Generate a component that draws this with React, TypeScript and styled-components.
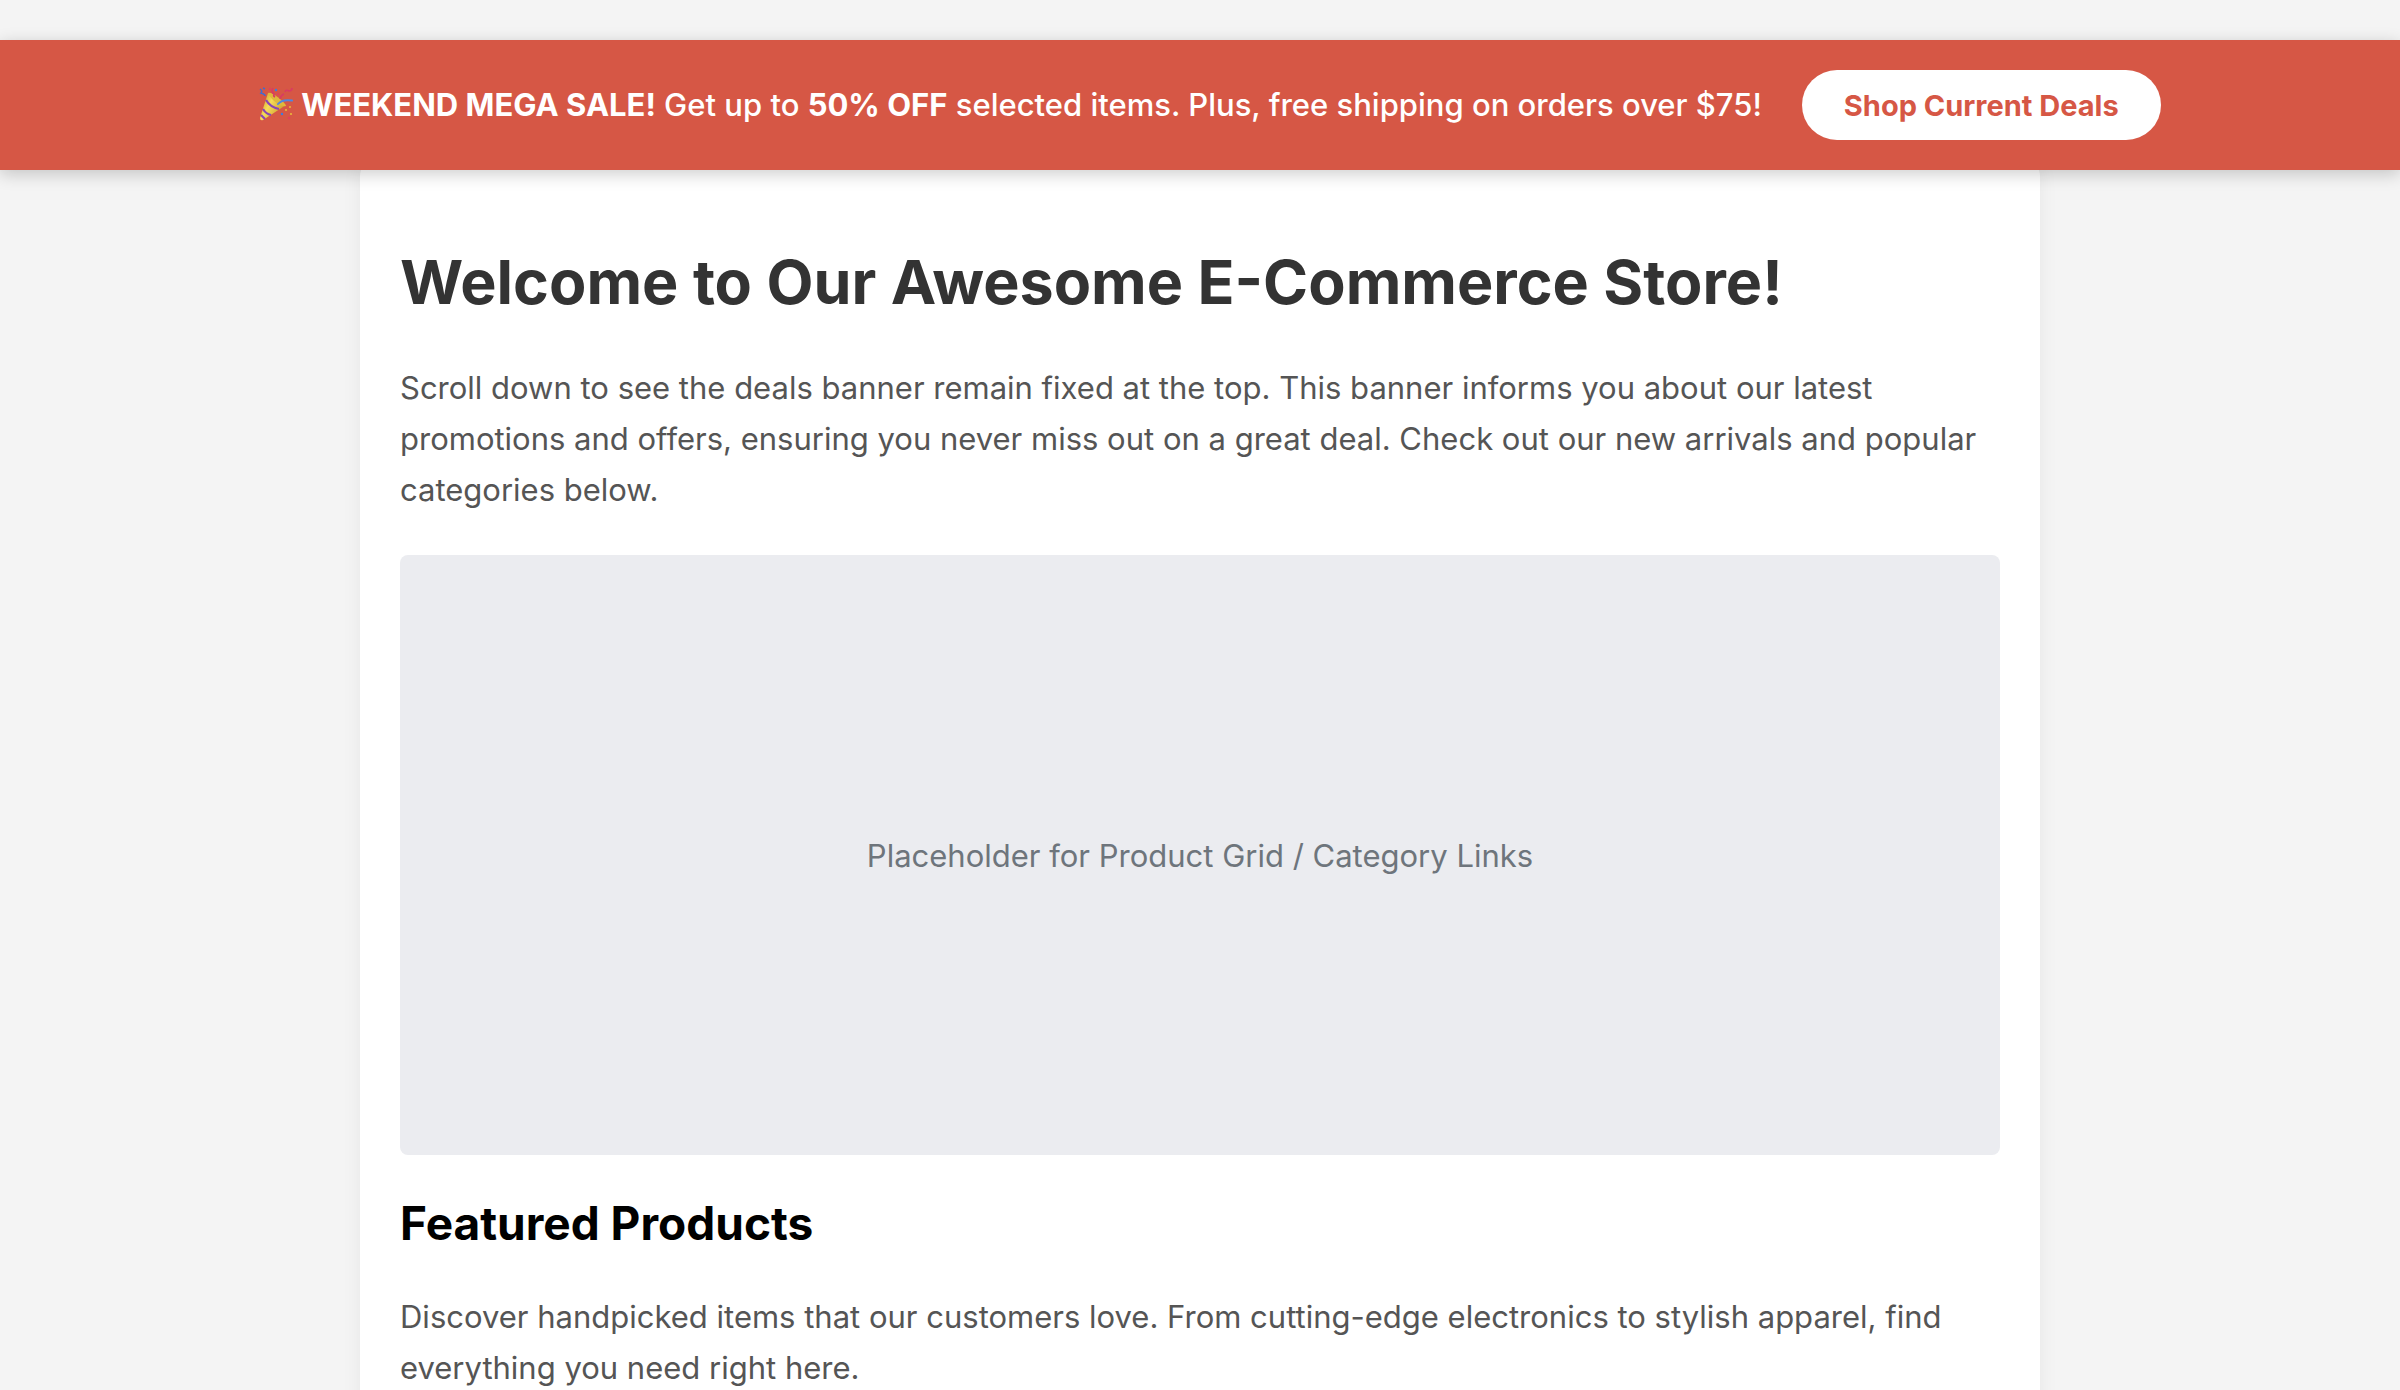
import React from "react";
import styled, { createGlobalStyle } from "styled-components";

const GlobalStyle = createGlobalStyle`
  *, *::before, *::after { box-sizing: border-box; }
  html { scrollbar-width: none; }
  body {
    margin: 0;
    background: #f4f4f4;
    color: #000;
    font-family: Inter, "Liberation Sans", sans-serif;
    font-size: 31px;
    line-height: 51px;
  }
`;

const Page = styled.div`
  padding-top: 40px;
`;

const Banner = styled.header`
  position: sticky;
  top: 0;
  z-index: 10;
  display: flex;
  align-items: center;
  justify-content: center;
  gap: 40px;
  padding: 30px 40px 30px 60px;
  background: #d65745;
  color: #fff;
  box-shadow: 0 4px 16px rgba(0, 0, 0, 0.2);
`;

const BannerText = styled.p`
  margin: 0;
  font-weight: 500;
  line-height: 50px;
`;

const Popper = styled.svg`
  width: 34px;
  height: 34px;
  margin-right: 8px;
  vertical-align: -5px;
`;

const DealsLink = styled.a`
  padding: 11px 42px 9px;
  border-radius: 40px;
  background: #fff;
  color: #d65745;
  font-size: 29px;
  line-height: 50px;
  font-weight: 700;
  text-decoration: none;
  white-space: nowrap;
`;

const Content = styled.main`
  max-width: 1680px;
  margin: -10px auto 0;
  padding: 84px 40px 40px;
  border-radius: 16px;
  background: #fff;
  box-shadow: 0 0 20px rgba(0, 0, 0, 0.06);
`;

const Title = styled.h1`
  margin: 0 0 42px;
  color: #333;
  font-size: 61px;
  line-height: 76px;
  font-weight: 700;
`;

const SectionTitle = styled.h2`
  margin: 40px 0;
  font-size: 46px;
  line-height: 56px;
  font-weight: 700;
`;

const Paragraph = styled.p`
  margin: 0 0 40px;
  color: #555;
`;

const Placeholder = styled.div`
  display: flex;
  align-items: center;
  justify-content: center;
  height: 600px;
  border-radius: 8px;
  background: #ebecf0;
  color: #6e757c;
`;

function PartyPopper() {
  return (
    <Popper viewBox="0 0 34 34" aria-hidden="true">
      <defs>
        <linearGradient id="cone" x1="0" y1="0" x2="1" y2="0.6">
          <stop offset="0" stopColor="#b98a22" />
          <stop offset="0.45" stopColor="#f6dc58" />
          <stop offset="1" stopColor="#c8962a" />
        </linearGradient>
      </defs>
      <path d="M9 6 L1 31 Q1 34 4 33 L27 18 Q19 17 9 6Z" fill="url(#cone)" />
      <path d="M9 6 Q12 5 20 11 Q27 17 27 19 Q22 20 15 14 Q9 8 9 6Z" fill="#dfb93c" />
      <path d="M7 13 Q11 20 20 22M4 22 Q7 27 12 28M2 28 L6 32" fill="none" stroke="#8a45b5" strokeWidth="2.2" />
      <path d="M19 17 Q23 12 33 13.500" fill="none" stroke="#4f86e0" strokeWidth="2" strokeLinecap="round" />
      <path d="M1 2 Q4 4 2 6 Q6 7 6 9M4 1 L6 2" fill="none" stroke="#3f6cd0" strokeWidth="1.500" />
      <path d="M14 1 Q12 5 15 7 Q14 9 16 10M26 5 Q27 2 30 4 Q33 4 33 1M21 12 Q22 8 25 7" fill="none" stroke="#d93a63" strokeWidth="1.600" />
      <g fill="#e23f5f">
        <circle cx="11" cy="2" r="1.200" />
        <circle cx="30" cy="31" r="1.200" />
        <circle cx="19" cy="7" r="1" />
      </g>
      <g fill="#3c7be0">
        <circle cx="17" cy="3" r="1.200" />
        <circle cx="23" cy="27" r="1.200" />
      </g>
      <g fill="#e9b93a">
        <circle cx="27" cy="23" r="1.100" />
        <circle cx="32" cy="27" r="1.100" />
        <circle cx="31" cy="20" r="1" />
      </g>
    </Popper>
  );
}

export default function App() {
  return (
    <>
      <GlobalStyle />
      <Page>
        <Banner>
          <BannerText>
            <PartyPopper />
            <strong>WEEKEND MEGA SALE!</strong> Get up to <strong>50% OFF</strong> selected items.
            Plus, free shipping on orders over $75!
          </BannerText>
          <DealsLink href="#deals">Shop Current Deals</DealsLink>
        </Banner>
        <Content>
          <Title>Welcome to Our Awesome E-Commerce Store!</Title>
          <Paragraph>
            Scroll down to see the deals banner remain fixed at the top. This banner informs you
            about our latest promotions and offers, ensuring you never miss out on a great deal.
            Check out our new arrivals and popular categories below.
          </Paragraph>
          <Placeholder>Placeholder for Product Grid / Category Links</Placeholder>
          <SectionTitle>Featured Products</SectionTitle>
          <Paragraph>
            Discover handpicked items that our customers love. From cutting-edge electronics to
            stylish apparel, find everything you need right here.
          </Paragraph>
        </Content>
      </Page>
    </>
  );
}
